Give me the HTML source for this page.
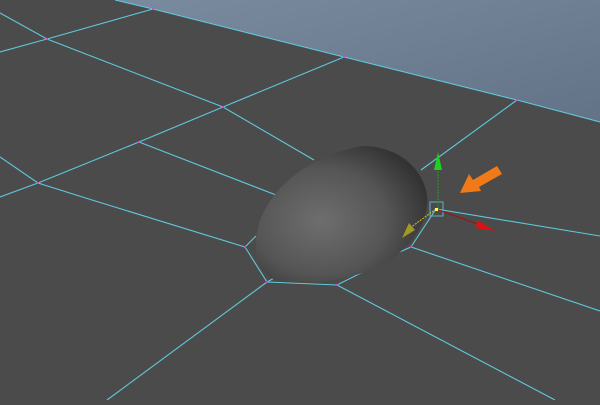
<!DOCTYPE html>
<html><head><style>html,body{margin:0;padding:0;background:#4b4b4b;overflow:hidden}</style></head>
<body>
<svg width="600" height="400" viewBox="0 0 600 400" xmlns="http://www.w3.org/2000/svg">
<defs>
<linearGradient id="sky" x1="0" y1="0" x2="1" y2="1">
<stop offset="0" stop-color="#7a8a9f"/><stop offset="1" stop-color="#637387"/>
</linearGradient>
<radialGradient id="egg" cx="0.38" cy="0.55" r="0.65">
<stop offset="0" stop-color="#6e6e6e"/><stop offset="0.6" stop-color="#555"/><stop offset="1" stop-color="#333"/>
</radialGradient>
</defs>
<rect width="600" height="400" fill="#4b4b4b"/>
<polygon points="115,0 600,0 600,122 517,100 344,57 153,9" fill="url(#sky)"/>
<g stroke="#5fc8dc" stroke-width="1.1" fill="none">
<polyline points="115,0 153,9 344,57 517,100 600,122"/>
<polyline points="0,13 47,39 223,107 314,160"/>
<polyline points="0,52 47,39 153,9"/>
<polyline points="344,57 223,107 139,142 38,183 0,197"/>
<polyline points="139,142 276,195"/>
<polyline points="517,100 421,170"/>
<polyline points="0,157 38,183 92,200 245,247 256,236"/>
<polyline points="245,247 267,282 276,277"/>
<polyline points="267,282 337,285 363,272"/>
<polyline points="267,282 107,400"/>
<polyline points="337,285 555,400"/>
<polyline points="600,311 411,247 395,254"/>
<polyline points="411,247 436,209 600,236"/>
</g>
<path d="M362,146 C395,146 422,165 427,195 C430,222 410,250 380,266 C350,281 300,286 275,280 C258,272 252,252 258,228 C266,195 300,158 362,146 Z" fill="url(#egg)"/>
<g fill="#e040e0">
<rect x="152" y="8" width="2" height="2"/><rect x="46" y="38" width="2" height="2"/><rect x="343" y="56" width="2" height="2"/><rect x="516" y="99" width="2" height="2"/><rect x="222" y="106" width="2" height="2"/><rect x="138" y="141" width="2" height="2"/><rect x="37" y="182" width="2" height="2"/><rect x="244" y="246" width="2" height="2"/><rect x="266" y="281" width="2" height="2"/><rect x="336" y="284" width="2" height="2"/><rect x="410" y="246" width="2" height="2"/>
</g>
<rect x="430" y="202" width="13" height="14" fill="none" stroke="#5fb0c8" stroke-width="1"/>
<line x1="438" y1="209" x2="438" y2="168" stroke="#1fa01f" stroke-width="1" stroke-dasharray="2,1"/>
<polygon points="438,152 434,170 442,170" fill="#1fd01f"/>
<line x1="436" y1="209" x2="480" y2="225" stroke="#a01010" stroke-width="1"/>
<polygon points="495,231 477,220 476,228" fill="#e01010"/>
<line x1="436" y1="209" x2="410" y2="228" stroke="#c8c020" stroke-width="1" stroke-dasharray="2,1"/>
<polygon points="402,238 409,223 415,230" fill="#a09a20"/>
<rect x="435" y="208" width="3" height="3" fill="#ffff40"/>
<polygon points="460,193 469,174 473,180 497,166 502,174 479,187 481,191" fill="#f07a18"/>
</svg>
</body></html>
